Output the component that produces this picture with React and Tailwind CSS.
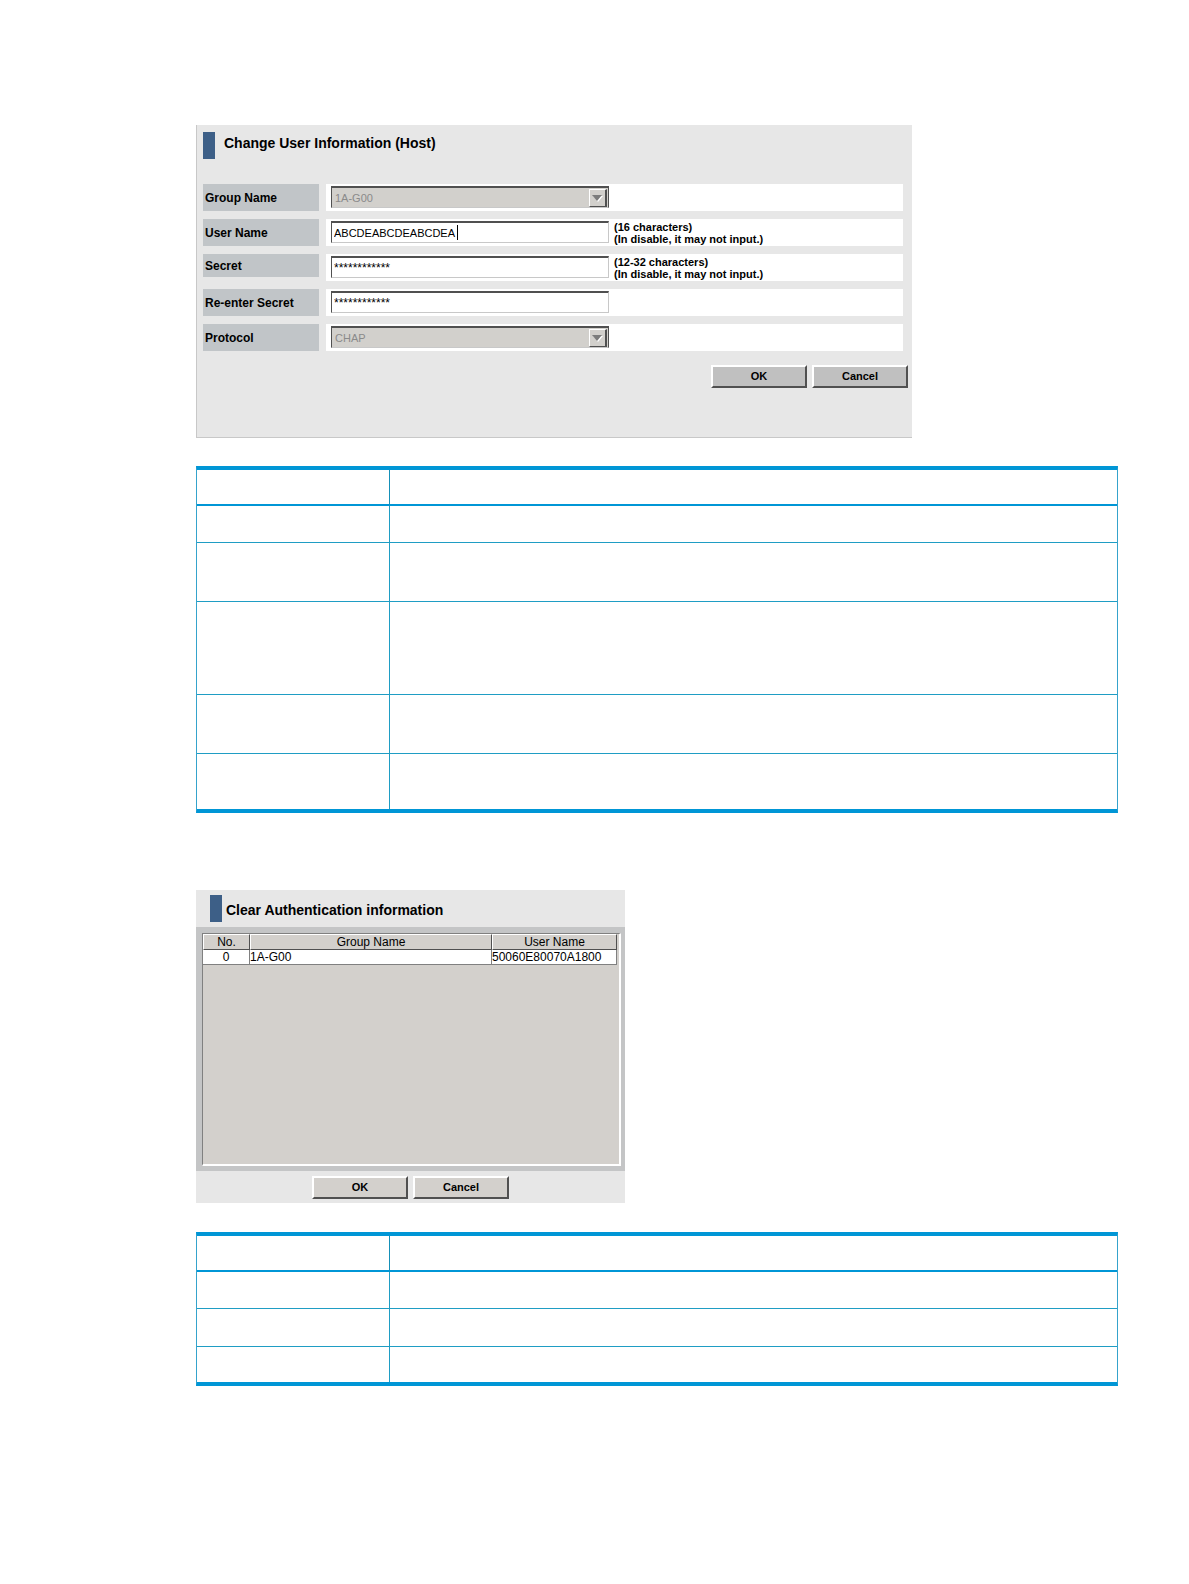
import React, { useState } from "react";

const Title = ({ children, className = "" }) => (
  <div className={`flex ${className}`}>
    <span className="h-[27px] w-3 bg-[#3d5f87]" />
    <h2 className="text-[14px] leading-4 font-bold">{children}</h2>
  </div>
);

const Button = ({ children, className = "" }) => (
  <button
    type="button"
    className={`h-[23px] w-24 border-2 border-t-white border-r-[#505050] border-b-[#505050] border-l-white pb-px text-[11px] leading-3 font-bold ${className}`}
  >
    {children}
  </button>
);

const Row = ({ id, label, labelHeight = "h-[27px]", hint, children }) => (
  <div className="flex h-[27px] gap-[7px]">
    <label
      htmlFor={id}
      className={`flex w-[116px] shrink-0 items-center bg-[#c1c5c8] px-0.5 pt-px text-[12px] leading-3 font-bold ${labelHeight}`}
    >
      {label}
    </label>
    <div className="flex flex-1 items-start gap-[5px] bg-white pt-0.5 pl-[5px]">
      <div className="relative w-[278px] shrink-0">{children}</div>
      {hint && (
        <p className="text-[11px] leading-3 font-bold">
          {hint}
          <br />
          (In disable, it may not input.)
        </p>
      )}
    </div>
  </div>
);

const TextField = ({ className = "", ...props }) => (
  <input
    type="text"
    className={`block h-[22px] w-full border border-t-2 border-t-[#505050] border-r-[#c8c8c8] border-b-[#c8c8c8] border-l-[#505050] bg-white pl-0.5 outline-none ${className}`}
    {...props}
  />
);

const LockedSelect = ({ id, value }) => (
  <>
    <select
      id={id}
      disabled
      className="block h-[22px] w-full appearance-none border border-t-2 border-t-[#505050] border-r-[#505050] border-b-[#c8c8c8] border-l-[#505050] bg-[#d2d0cc] pt-0.5 pl-[3px] text-[11px] text-[#8a8a8a] disabled:opacity-100"
    >
      <option>{value}</option>
    </select>
    <span className="pointer-events-none absolute top-[3px] right-0.5 flex size-[18px] items-center justify-center border border-t-white border-r-2 border-r-[#505050] border-b-[#505050] border-l-white bg-[#d2d0cc]">
      <svg width="11" height="7" viewBox="0 0 11 7">
        <path d="M1 1h10L6 7z" fill="#fff" />
        <path d="M0 0h10L5 6z" fill="#7c7c7c" />
      </svg>
    </span>
  </>
);

// two-column item / description grid with the cells left blank
const BlankTable = ({ rows, className = "" }) => (
  <table
    className={`w-full table-fixed border-separate border-spacing-0 border-x border-y-4 border-x-[#35a3cc] border-y-[#0096d6] ${className}`}
  >
    <thead>
      <tr className="h-9">
        <th scope="col" className="w-[193px] border-r border-b-2 border-r-[#1590b8] border-b-[#0096d6] p-0" />
        <th scope="col" className="border-b-2 border-[#0096d6] p-0" />
      </tr>
    </thead>
    <tbody>
      {rows.map((height, i) => (
        <tr key={i} className={`${height} *:border-b *:p-0 last:*:border-b-0`}>
          <td className="border-r border-[#1f9dc4]" />
          <td className="border-[#1f9dc4]" />
        </tr>
      ))}
    </tbody>
  </table>
);

const ChangeUserPanel = () => {
  const [user, setUser] = useState("ABCDEABCDEABCDEA");
  const [secret, setSecret] = useState("************");
  const [again, setAgain] = useState("************");

  return (
    <form className="w-[716px] border-b border-l border-[#c8c8c8] bg-[#e7e7e7] pt-[7px] pb-[49px] pl-1.5">
      <Title className="gap-[9px] *:last:mt-[3px]">Change User Information (Host)</Title>
      <div className="mt-[25px] mr-[9px] flex flex-col gap-2">
        <Row id="group" label="Group Name">
          <LockedSelect id="group" value="1A-G00" />
        </Row>
        <Row id="user" label="User Name" hint="(16 characters)">
          <TextField
            id="user"
            className="text-[11px]"
            value={user}
            onChange={(e) => setUser(e.target.value)}
          />
          <span className="absolute top-1 left-[126px] h-[15px] w-px bg-black" />
        </Row>
        <Row id="secret" label="Secret" labelHeight="h-[23px]" hint="(12-32 characters)">
          <TextField
            id="secret"
            className="text-[12px]"
            value={secret}
            onChange={(e) => setSecret(e.target.value)}
          />
        </Row>
        <Row id="again" label="Re-enter Secret">
          <TextField
            id="again"
            className="text-[12px]"
            value={again}
            onChange={(e) => setAgain(e.target.value)}
          />
        </Row>
        <Row id="protocol" label="Protocol">
          <LockedSelect id="protocol" value="CHAP" />
        </Row>
      </div>
      <div className="mt-3.5 mr-1 flex justify-end gap-[5px]">
        <Button className="bg-[#c0c0c0]">OK</Button>
        <Button className="bg-[#c0c0c0]">Cancel</Button>
      </div>
    </form>
  );
};

const ClearAuthPanel = () => (
  <section className="w-[429px] bg-[#e7e7e7] pt-[5px] pb-1">
    <Title className="mb-[5px] items-center gap-1 pl-[14px] *:last:mt-[3px]">
      Clear Authentication information
    </Title>
    <div className="bg-[#c4c5c6] pt-1.5 pr-1 pb-[5px] pl-1.5">
      <div className="h-[233px] border border-t-[#808080] border-r-2 border-r-white border-b-2 border-b-white border-l-[#808080] bg-[#d3d0cc] pr-0.5">
        <table className="w-full table-fixed border-separate border-spacing-0 text-[12px] leading-[14px]">
          <thead>
            <tr className="*:border *:border-t-white *:border-r-[#505050] *:border-b-[#505050] *:border-l-white *:p-0 *:font-normal">
              <th scope="col" className="w-[47px]">No.</th>
              <th scope="col">Group Name</th>
              <th scope="col" className="w-[125px]">User Name</th>
            </tr>
          </thead>
          <tbody>
            <tr className="bg-white *:border-r *:border-b *:border-[#808080] *:p-0">
              <td className="text-center">0</td>
              <td>1A-G00</td>
              <td>50060E80070A1800</td>
            </tr>
          </tbody>
        </table>
      </div>
    </div>
    <div className="mt-[5px] flex justify-center gap-[5px]">
      <Button className="bg-[#d3d0cc]">OK</Button>
      <Button className="bg-[#d3d0cc]">Cancel</Button>
    </div>
  </section>
);

export default function App() {
  return (
    <main className="min-h-screen bg-white pt-[125px] pr-[71px] pb-20 pl-[196px] font-['Liberation_Sans',Arial,sans-serif] text-black">
      <ChangeUserPanel />
      <BlankTable className="mt-7" rows={["h-[37px]", "h-[59px]", "h-[93px]", "h-[59px]", "h-[55px]"]} />
      <div className="mt-[77px]">
        <ClearAuthPanel />
      </div>
      <BlankTable className="mt-[29px]" rows={["h-[37px]", "h-[38px]", "h-[35px]"]} />
    </main>
  );
}
